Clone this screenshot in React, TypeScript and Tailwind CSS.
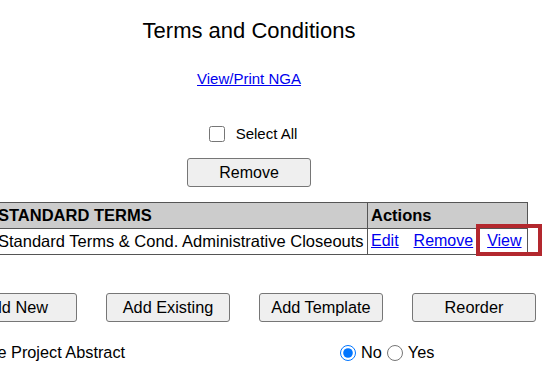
export default function App() {
  return (
    <div className="min-h-[375px] w-[557px] overflow-hidden bg-white text-black font-['Liberation_Sans',Arial,sans-serif]">
      <div className="relative -ml-[47px] w-[592px] pt-[18px]">
        {/* Heading */}
        <div className="text-center text-[22px] leading-[25px]">Terms and Conditions</div>

        <div className="mt-[27px] text-center text-[15px] leading-[17px]">
          <a href="#" className="text-[#0000ee] underline">View/Print NGA</a>
        </div>

        <label className="mt-[38px] flex h-[18px] items-center justify-center pl-[8px] text-[15px]">
          <input type="checkbox" className="m-0 h-4 w-4" />
          <span className="ml-[11px]">Select All</span>
        </label>

        <div className="mt-[15px] flex justify-center">
          <button className="h-[29px] w-[124px] rounded-[3px] border border-[#767676] bg-[#efefef] text-[16px]">
            Remove
          </button>
        </div>

        {/* Terms table */}
        <table className="ml-[42px] mt-[15px] w-[533px] border-collapse text-[16.5px]">
          <thead>
            <tr className="bg-[#cccccc]">
              <th className="h-[24px] border border-[#555] px-[2px] py-0 text-left font-bold">STANDARD TERMS</th>
              <th className="h-[24px] w-[160px] border border-[#555] px-[3px] py-0 text-left font-bold">Actions</th>
            </tr>
          </thead>
          <tbody>
            <tr>
              <td className="h-[25px] whitespace-nowrap border border-[#555] px-[2px] py-0">
                Standard Terms &amp; Cond. Administrative Closeouts
              </td>
              <td className="h-[25px] whitespace-nowrap border border-[#555] px-[3px] py-0 text-[16px]">
                <a href="#" className="text-[#0000ee] underline">Edit</a>
                <a href="#" className="ml-[15px] text-[#0000ee] underline">Remove</a>
                <a href="#" className="ml-[14px] text-[#0000ee] underline">View</a>
              </td>
            </tr>
          </tbody>
        </table>

        {/* highlight around View */}
        <div className="pointer-events-none absolute left-[523px] top-[224px] h-[32px] w-[66px] border-[4px] border-[#b3282e]" />

        <div className="mt-[38px] grid grid-cols-[repeat(4,153px)]">
          {["Add New", "Add Existing", "Add Template", "Reorder"].map((b) => (
            <div key={b}>
              <button className="h-[29px] w-[124px] rounded-[3px] border border-[#767676] bg-[#efefef] text-[16.3px]">
                {b}
              </button>
            </div>
          ))}
        </div>

        <div className="mt-[21px] flex h-[20px] items-center text-[16.3px]">
          <div className="w-[387px] pl-[1px]">Include Project Abstract</div>
          <input type="radio" name="abstract" defaultChecked className="m-0 h-4 w-4" />
          <span className="ml-[5px]">No</span>
          <input type="radio" name="abstract" className="ml-[5px] mr-0 my-0 h-4 w-4" />
          <span className="ml-[5px]">Yes</span>
        </div>
      </div>
    </div>
  );
}
